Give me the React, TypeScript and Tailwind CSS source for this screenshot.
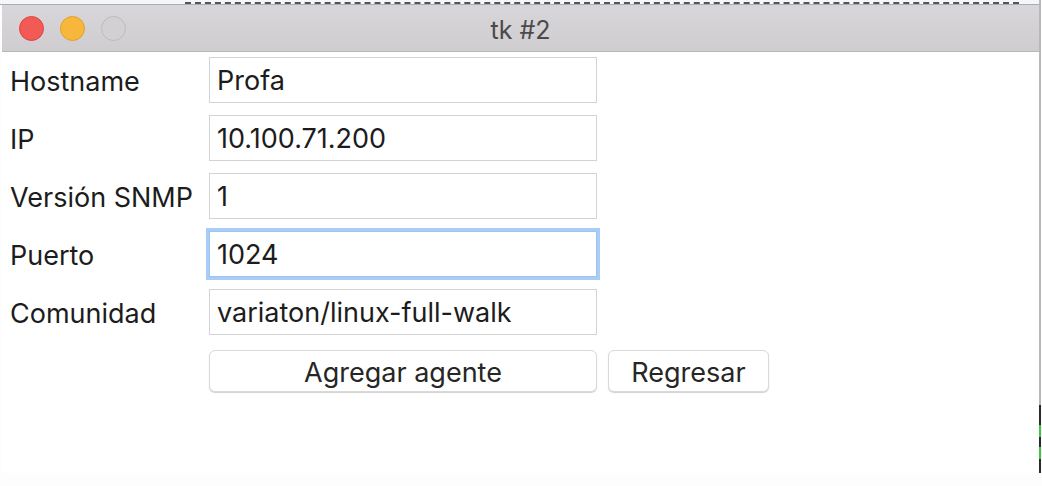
import React from "react";

const FIELDS = [
  { label: "Hostname", value: "Profa" },
  { label: "IP", value: "10.100.71.200" },
  { label: "Versión SNMP", value: "1" },
  { label: "Puerto", value: "1024", focused: true },
  { label: "Comunidad", value: "variaton/linux-full-walk" },
];

export default function App() {
  return (
    <div className="w-[1042px] h-[486px] bg-[#fdfdfd] overflow-hidden flex font-['Inter','Liberation_Sans',sans-serif] text-[#1c1c1c]">
      <div className="flex-1 min-w-0 flex flex-col">
        {/* Desktop peeking above the window */}
        <div className="h-[5px] bg-[#f4f6f8] flex flex-col justify-end">
          <div className="h-[2px] ml-[185px] mr-[20px] border-b-2 border-dashed border-[#555]" />
          <div className="h-[1px] bg-[#9fb0bd]" />
        </div>

        {/* Window */}
        <div className="flex flex-col ml-[2px]">
          {/* Title bar */}
          <div className="h-[47px] flex items-center bg-gradient-to-b from-[#d8d6d8] to-[#cfcdcf] border-b border-[#b9b8b9] relative">
            <div className="flex items-center gap-[16px] pl-[17px]">
              <span className="w-[25px] h-[25px] rounded-full bg-[#f25a55] border border-[#e0443f]" />
              <span className="w-[25px] h-[25px] rounded-full bg-[#f6b73a] border border-[#e0a12c]" />
              <span className="w-[25px] h-[25px] rounded-full bg-[#d2d0d2] border border-[#bdbbbd]" />
            </div>
            <div className="absolute inset-0 flex items-center justify-center pt-[5px] text-[25px] text-[#4a4a4a]">
              tk #2
            </div>
          </div>

          {/* Body */}
          <div className="h-[421px] bg-white pt-[5px]">
            <div className="grid grid-cols-[207px_388px] gap-y-[12px]">
              {FIELDS.map((f) => (
                <React.Fragment key={f.label}>
                  <div className="h-[46px] flex items-center pl-[8px] pt-[4px] text-[27px]">{f.label}</div>
                  <div
                    className={
                      f.focused
                        ? "h-[46px] flex items-center px-[7px] pt-[3px] bg-white border border-[#9ec4ee] ring-[3px] ring-[#a9cdf6] text-[27px]"
                        : "h-[46px] flex items-center px-[7px] pt-[3px] bg-white border border-[#d3d3d3] text-[27px]"
                    }
                  >
                    {f.value}
                  </div>
                </React.Fragment>
              ))}
            </div>

            {/* Buttons */}
            <div className="flex gap-[11px] pl-[207px] mt-[15px]">
              <button className="w-[388px] h-[42px] pt-[2px] rounded-[6px] bg-white border border-[#d9d9d9] shadow-[0_1px_1px_rgba(0,0,0,0.18)] text-[27px] text-[#262626]">
                Agregar agente
              </button>
              <button className="w-[161px] h-[42px] pt-[2px] rounded-[6px] bg-white border border-[#d9d9d9] shadow-[0_1px_1px_rgba(0,0,0,0.18)] text-[27px] text-[#262626]">
                Regresar
              </button>
            </div>
          </div>
        </div>
      </div>

      {/* Edge of the neighbouring window */}
      <div className="w-[2px] mr-[1px] h-[473px] flex flex-col">
        <div className="h-[405px] bg-[#b8b8b8]" />
        <div className="h-[20px] bg-[#2a2a2a]" />
        <div className="h-[12px] bg-[#3ec43e]" />
        <div className="h-[10px] bg-[#2a2a2a]" />
        <div className="h-[12px] bg-[#3ec43e]" />
        <div className="h-[14px] bg-[#2a2a2a]" />
      </div>
    </div>
  );
}
